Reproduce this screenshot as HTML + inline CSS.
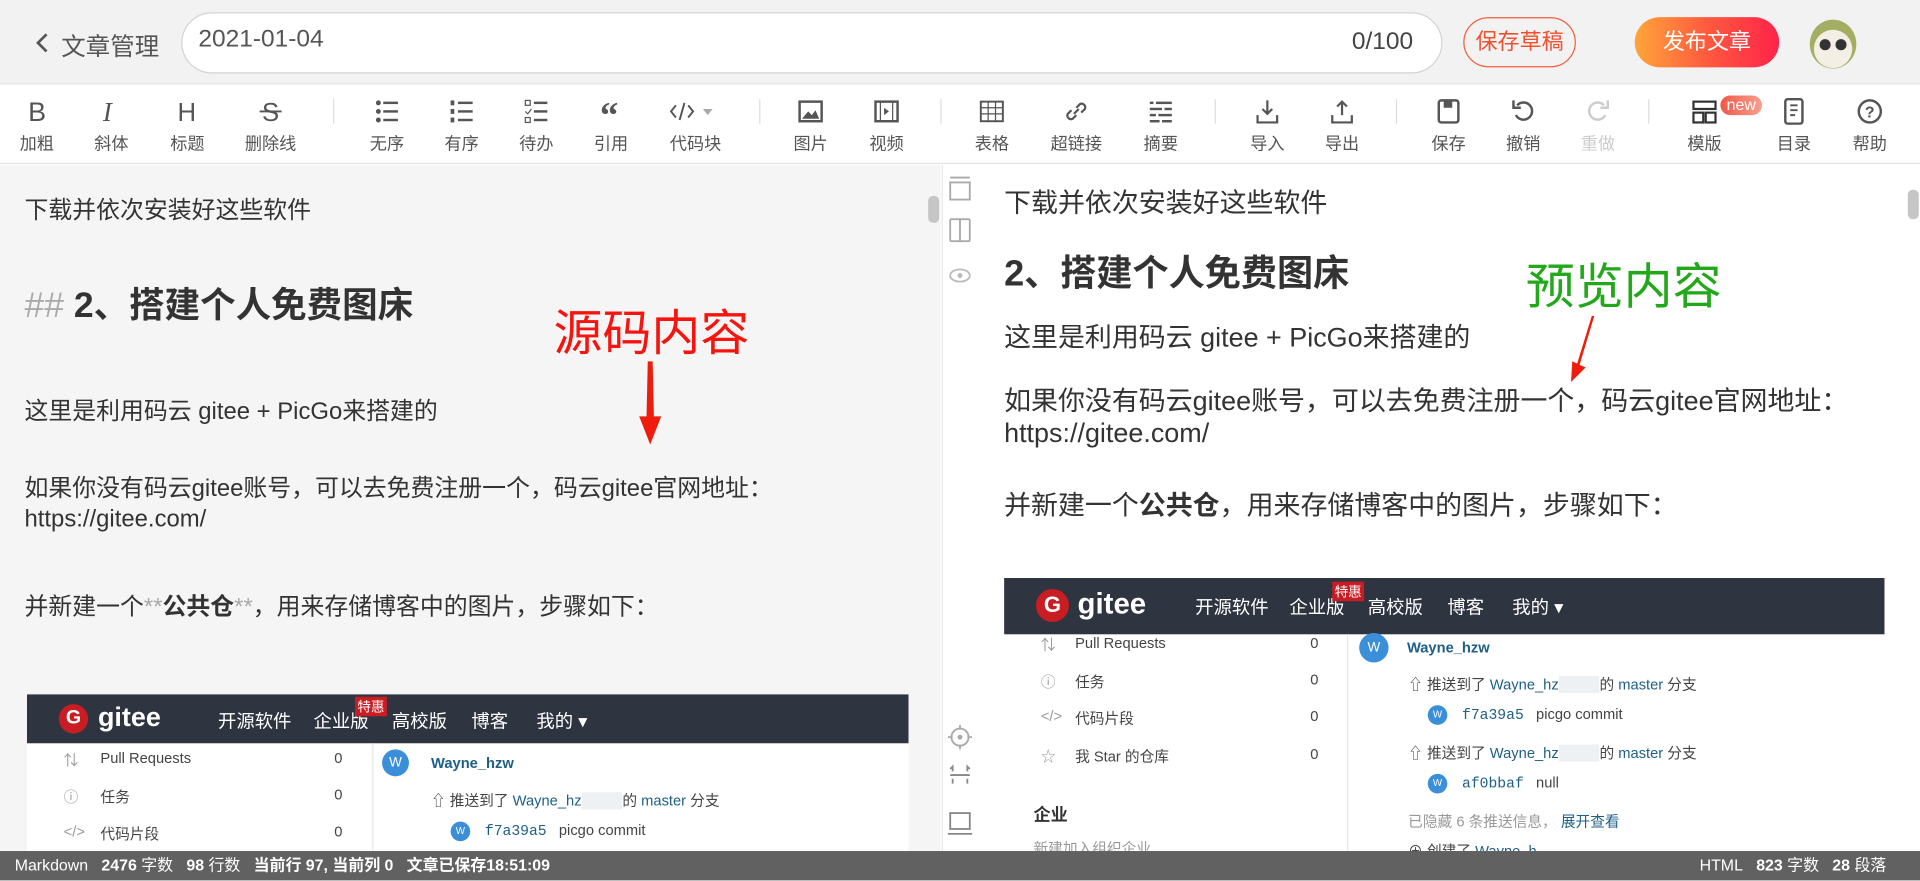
<!DOCTYPE html>
<html><head><meta charset="utf-8"><style>
*{margin:0;padding:0;box-sizing:border-box}
html,body{width:1920px;height:881px;overflow:hidden;background:#fff}
#w{position:absolute;left:0;top:0;width:1568px;height:719px;transform:scale(1.22449);transform-origin:0 0;font-family:"Liberation Sans","Noto Sans CJK SC",sans-serif;color:#333}
.a{position:absolute;white-space:nowrap}
.hd{left:0;top:0;width:1568px;height:68px;background:#f2f2f2}
.tb{left:0;top:68px;width:1568px;height:66px;background:#fff;border-top:1px solid #e4e4e4;border-bottom:1px solid #e4e4e4}
.it{position:absolute;top:0;width:60px;margin-left:-30px;text-align:center}
.it svg{position:absolute;left:19px;top:11px}
.it span{position:absolute;left:0;width:60px;top:38px;font-size:14px;color:#555}
.sep{position:absolute;top:12px;width:1px;height:20px;background:#ddd}
.lp{left:0;top:135px;width:768px;height:560px;background:#f5f5f5}
.rp{left:769px;top:135px;width:799px;height:560px;background:#fff;border-left:1px solid #e6e6e6}
.t{font-size:19.5px;color:#333}
.r{font-size:22px;color:#333}
.g{position:absolute;background:#fff;overflow:hidden}
.gn{position:absolute;left:0;top:0;width:100%;background:#2f3441;color:#fff}
.gs{font-size:12px;color:#444}
.lk{color:#1d5f86}
.st{left:0;top:695px;width:1568px;height:24px;background:#616161;color:#fff;font-size:13px;font-weight:bold;line-height:24px}
</style></head><body><div id="w">
<div class="a hd"></div>
<svg class="a" style="left:28px;top:26px" width="12" height="18"><path d="M10 2L3 9l7 7" stroke="#555" stroke-width="2.2" fill="none"/></svg>
<div class="a" style="left:50px;top:22px;font-size:20px;color:#555">文章管理</div>
<div class="a" style="left:148px;top:10px;width:1030px;height:50px;background:#fff;border:1px solid #d3d3d3;border-radius:25px"></div>
<div class="a" style="left:162px;top:21px;font-size:20px;color:#555">2021-01-04</div>
<div class="a" style="left:1104px;top:23px;font-size:20px;color:#444">0/100</div>
<div class="a" style="left:1195px;top:14px;width:92px;height:41px;border:1px solid #f35f3c;border-radius:21px;color:#f2512f;font-size:18px;line-height:39px;text-align:center">保存草稿</div>
<div class="a" style="left:1335px;top:14px;width:118px;height:41px;border-radius:21px;background:linear-gradient(90deg,#ffa53a,#ff5a3e 50%,#ff2349);color:#fff;font-size:18px;line-height:41px;text-align:center">发布文章</div>
<div class="a" style="left:1478px;top:16px;width:38px;height:40px;border-radius:50%;background:radial-gradient(circle at 50% 60%,#f4efe5 50%,#a4ae62 52%)"></div>
<div class="a" style="left:1486px;top:32px;width:9px;height:9px;border-radius:50%;background:#333"></div>
<div class="a" style="left:1499px;top:32px;width:9px;height:9px;border-radius:50%;background:#333"></div>

<div class="a tb">
<div class="it" style="left:30px"><svg width="22" height="22"><text x="4" y="19" font-size="22" fill="#555" font-family="Liberation Sans">B</text></svg><span>加粗</span></div>
<div class="it" style="left:91px"><svg width="22" height="22"><text x="4" y="19" font-size="22" font-style="italic" fill="#555" font-family="Liberation Serif">I</text></svg><span>斜体</span></div>
<div class="it" style="left:153px"><svg width="22" height="22"><text x="3" y="19" font-size="21" fill="#555" font-family="Liberation Sans">H</text></svg><span>标题</span></div>
<div class="it" style="left:221px"><svg width="22" height="22"><text x="4" y="19" font-size="21" fill="#555" font-family="Liberation Sans">S</text><path d="M2 11h18" stroke="#555" stroke-width="1.6"/></svg><span>删除线</span></div>
<div class="sep" style="left:272px"></div>
<div class="it" style="left:316px"><svg width="22" height="22" fill="#555"><circle cx="4" cy="4" r="2"/><circle cx="4" cy="11" r="2"/><circle cx="4" cy="18" r="2"/><rect x="8" y="3" width="12" height="2"/><rect x="8" y="10" width="12" height="2"/><rect x="8" y="17" width="12" height="2"/></svg><span>无序</span></div>
<div class="it" style="left:377px"><svg width="22" height="22" fill="#555"><rect x="2" y="2" width="3" height="4"/><rect x="2" y="9" width="3" height="4"/><rect x="2" y="16" width="3" height="4"/><rect x="8" y="3" width="12" height="2"/><rect x="8" y="10" width="12" height="2"/><rect x="8" y="17" width="12" height="2"/></svg><span>有序</span></div>
<div class="it" style="left:438px"><svg width="22" height="22" fill="#555"><rect x="2" y="2" width="4" height="4" fill="none" stroke="#555"/><rect x="2" y="16" width="4" height="4" fill="none" stroke="#555"/><path d="M2 11l2 2 3-4" stroke="#555" fill="none"/><rect x="9" y="3" width="11" height="2"/><rect x="9" y="10" width="11" height="2"/><rect x="9" y="17" width="11" height="2"/></svg><span>待办</span></div>
<div class="it" style="left:499px"><svg width="22" height="22"><text x="2" y="24" font-size="30" font-weight="bold" fill="#555" font-family="Liberation Serif">“</text></svg><span>引用</span></div>
<div class="it" style="left:562px"><svg width="36" height="22" style="left:14px"><path d="M6 6l-4 5 4 5M16 6l4 5-4 5M13 4l-4 14" stroke="#555" stroke-width="1.6" fill="none"/><path d="M28 9h8l-4 5z" fill="#aaa"/></svg><span style="left:6px">代码块</span></div>
<div class="sep" style="left:620px"></div>
<div class="it" style="left:662px"><svg width="22" height="22"><rect x="2" y="3" width="18" height="16" fill="none" stroke="#555" stroke-width="2"/><path d="M4 17l5-6 3 3 3-4 3 7z" fill="#555"/></svg><span>图片</span></div>
<div class="it" style="left:724px"><svg width="22" height="22"><rect x="2" y="3" width="18" height="16" fill="none" stroke="#555" stroke-width="2"/><path d="M6 3v16M16 3v16" stroke="#555"/><path d="M9 8l4 3-4 3z" fill="#555"/></svg><span>视频</span></div>
<div class="sep" style="left:768px"></div>
<div class="it" style="left:810px"><svg width="22" height="22"><rect x="2" y="3" width="18" height="16" fill="none" stroke="#555" stroke-width="1.6"/><path d="M2 8h18M2 13h18M8 3v16M14 3v16" stroke="#555"/></svg><span>表格</span></div>
<div class="it" style="left:879px"><svg width="22" height="22"><path d="M9 13l4-4M7 10l-3 3a3 3 0 004 4l3-3M15 12l3-3a3 3 0 00-4-4l-3 3" stroke="#555" stroke-width="1.8" fill="none"/></svg><span>超链接</span></div>
<div class="it" style="left:948px"><svg width="22" height="22" fill="#555"><rect x="2" y="3" width="3" height="2"/><rect x="7" y="3" width="13" height="2"/><rect x="2" y="8" width="10" height="2"/><rect x="14" y="8" width="6" height="2"/><rect x="2" y="13" width="5" height="2"/><rect x="9" y="13" width="11" height="2"/><rect x="2" y="18" width="8" height="2"/><rect x="12" y="18" width="8" height="2"/></svg><span>摘要</span></div>
<div class="sep" style="left:992px"></div>
<div class="it" style="left:1035px"><svg width="22" height="22"><path d="M11 2v11M7 9l4 4 4-4M3 14v6h16v-6" stroke="#555" stroke-width="1.8" fill="none"/></svg><span>导入</span></div>
<div class="it" style="left:1096px"><svg width="22" height="22"><path d="M11 14V3M7 7l4-4 4 4M3 14v6h16v-6" stroke="#555" stroke-width="1.8" fill="none"/></svg><span>导出</span></div>
<div class="sep" style="left:1140px"></div>
<div class="it" style="left:1183px"><svg width="22" height="22"><rect x="3" y="2" width="16" height="18" rx="2" fill="none" stroke="#555" stroke-width="2"/><rect x="7" y="2" width="7" height="6" fill="#555"/></svg><span>保存</span></div>
<div class="it" style="left:1244px"><svg width="22" height="22"><path d="M6 6a7 7 0 11-1 8" stroke="#555" stroke-width="2" fill="none"/><path d="M3 2v6h6" stroke="#555" stroke-width="2" fill="none"/></svg><span>撤销</span></div>
<div class="it" style="left:1305px"><svg width="22" height="22"><path d="M16 6a7 7 0 101 8" stroke="#ccc" stroke-width="2" fill="none"/><path d="M19 2v6h-6" stroke="#ccc" stroke-width="2" fill="none"/></svg><span style="color:#ccc">重做</span></div>
<div class="sep" style="left:1346px"></div>
<div class="it" style="left:1392px"><svg width="22" height="22"><rect x="2" y="3" width="18" height="6" fill="none" stroke="#333" stroke-width="1.8"/><rect x="2" y="12" width="8" height="8" fill="none" stroke="#333" stroke-width="1.8"/><rect x="12" y="12" width="8" height="8" fill="none" stroke="#333" stroke-width="1.8"/></svg><span>模版</span></div>
<div class="a" style="left:1405px;top:9px;width:34px;height:16px;border-radius:8px;background:linear-gradient(90deg,#f0584a,#f7a08f);color:#fff;font-size:13px;line-height:15px;text-align:center">new</div>
<div class="it" style="left:1465px"><svg width="22" height="22"><rect x="4" y="1" width="14" height="20" rx="2" fill="none" stroke="#555" stroke-width="2"/><path d="M8 6h6M8 10h6M8 14h4" stroke="#555" stroke-width="1.6"/></svg><span>目录</span></div>
<div class="it" style="left:1527px"><svg width="22" height="22"><circle cx="11" cy="11" r="9" fill="none" stroke="#555" stroke-width="2"/><text x="7" y="16" font-size="13" font-weight="bold" fill="#555" font-family="Liberation Sans">?</text></svg><span>帮助</span></div>
</div>

<div class="a lp"></div>
<div class="a rp"></div>
<div class="a" style="left:758px;top:160px;width:9px;height:22px;border-radius:4px;background:#c6c6c6"></div>
<div class="a" style="left:1558px;top:155px;width:9px;height:24px;border-radius:4px;background:#c6c6c6"></div>
<svg class="a" style="left:774px;top:143px" width="20" height="100"><path d="M2 2h16" stroke="#aaa" stroke-width="1.5"/><rect x="2" y="6" width="16" height="14" fill="none" stroke="#aaa" stroke-width="1.5"/><rect x="2" y="36" width="16" height="18" rx="1" fill="none" stroke="#aaa" stroke-width="1.5"/><path d="M10 36v18" stroke="#aaa" stroke-width="1.5"/><ellipse cx="10" cy="82" rx="8" ry="5" fill="none" stroke="#bbb" stroke-width="1.5"/><circle cx="10" cy="82" r="2" fill="#bbb"/></svg>
<svg class="a" style="left:774px;top:592px" width="20" height="95"><circle cx="10" cy="10" r="7" fill="none" stroke="#aaa" stroke-width="1.5"/><circle cx="10" cy="10" r="2" fill="#aaa"/><path d="M10 0v4M10 16v4M0 10h4M16 10h4" stroke="#aaa" stroke-width="1.5"/><path d="M4 38v-4l-2 2M16 38v-4l2 2M4 44v4M16 44v4M2 41h16" stroke="#888" stroke-width="1.5" fill="none"/><rect x="2" y="72" width="16" height="13" fill="none" stroke="#888" stroke-width="1.5"/><path d="M0 89h20" stroke="#888" stroke-width="1.5"/></svg>

<!-- left content -->
<div class="a t" style="left:20px;top:155px">下载并依次安装好这些软件</div>
<div class="a" style="left:20px;top:226px;font-size:29px;font-weight:bold;color:#333"><span style="color:#aaa;font-weight:normal">##</span> 2、搭建个人免费图床</div>
<div class="a" style="left:452px;top:240px;font-size:40px;color:#f5140e">源码内容</div>
<svg class="a" style="left:520px;top:295px" width="22" height="70"><path d="M9 0h4l1 45h6L11 68 2 45h6z" fill="#ee1c0c"/></svg>
<div class="a t" style="left:20px;top:319px">这里是利用码云 gitee + PicGo来搭建的</div>
<div class="a t" style="left:20px;top:382px">如果你没有码云gitee账号，可以去免费注册一个，码云gitee官网地址：</div>
<div class="a t" style="left:20px;top:413px">https://gitee.com/</div>
<div class="a t" style="left:20px;top:479px">并新建一个<span style="color:#aaa">**</span><b>公共仓</b><span style="color:#aaa">**</span>，用来存储博客中的图片，步骤如下：</div>

<!-- left gitee -->
<div class="g" style="left:22px;top:567px;width:720px;height:128px">
 <div class="gn" style="height:40px"></div>
 <div class="a" style="left:26px;top:8px;width:24px;height:24px;border-radius:50%;background:#c71d23;color:#fff;font-weight:bold;font-size:16px;text-align:center;line-height:24px">G</div>
 <div class="a" style="left:58px;top:6px;color:#fff;font-size:22px;font-weight:bold">gitee</div>
 <div class="a" style="left:156px;top:11px;color:#fff;font-size:15px">开源软件</div>
 <div class="a" style="left:234px;top:11px;color:#fff;font-size:15px">企业版</div>
 <div class="a" style="left:268px;top:2px;background:#c71d23;color:#fff;font-size:11px;padding:0 2px">特惠</div>
 <div class="a" style="left:298px;top:11px;color:#fff;font-size:15px">高校版</div>
 <div class="a" style="left:363px;top:11px;color:#fff;font-size:15px">博客</div>
 <div class="a" style="left:416px;top:11px;color:#fff;font-size:15px">我的 ▾</div>
 <div class="a" style="left:282px;top:40px;width:1px;height:90px;background:#e6e6e6"></div>
 <div class="a gs" style="left:30px;top:45px;color:#999">⇅</div><div class="a gs" style="left:60px;top:45px">Pull Requests</div><div class="a gs" style="left:251px;top:45px">0</div>
 <div class="a gs" style="left:30px;top:75px;color:#999">ⓘ</div><div class="a gs" style="left:60px;top:75px">任务</div><div class="a gs" style="left:251px;top:75px">0</div>
 <div class="a gs" style="left:30px;top:105px;color:#999">&lt;/&gt;</div><div class="a gs" style="left:60px;top:105px">代码片段</div><div class="a gs" style="left:251px;top:105px">0</div>
 <div class="a" style="left:290px;top:45px;width:22px;height:22px;border-radius:50%;background:#3b8fd8;color:#fff;font-size:11px;text-align:center;line-height:22px">W</div>
 <div class="a lk" style="left:330px;top:49px;font-size:12px;font-weight:bold">Wayne_hzw</div>
 <div class="a gs" style="left:330px;top:78px">⇧ 推送到了 <span class="lk">Wayne_hz</span><span style="background:#eef1f4">&nbsp;&nbsp;&nbsp;&nbsp;&nbsp;&nbsp;&nbsp;&nbsp;&nbsp;&nbsp;</span>的 <span class="lk">master</span> 分支</div>
 <div class="a" style="left:346px;top:104px;width:16px;height:16px;border-radius:50%;background:#3b8fd8;color:#fff;font-size:8px;text-align:center;line-height:16px">W</div>
 <div class="a gs" style="left:374px;top:104px"><span class="lk" style="font-family:'Liberation Mono',monospace">f7a39a5</span>&nbsp;&nbsp; picgo commit</div>
</div>

<!-- right content -->
<div class="a r" style="left:820px;top:148px">下载并依次安装好这些软件</div>
<div class="a" style="left:820px;top:200px;font-size:29.5px;font-weight:bold;color:#333">2、搭建个人免费图床</div>
<div class="a" style="left:1246px;top:202px;font-size:40px;color:#22a81a">预览内容</div>
<svg class="a" style="left:1278px;top:256px" width="26" height="56"><path d="M22 2h2L12 42l5 2-12 12 1-17 4 2z" fill="#ee1c0c"/></svg>
<div class="a r" style="left:820px;top:258px">这里是利用码云 gitee + PicGo来搭建的</div>
<div class="a r" style="left:820px;top:310px">如果你没有码云gitee账号，可以去免费注册一个，码云gitee官网地址：</div>
<div class="a r" style="left:820px;top:341px">https://gitee.com/</div>
<div class="a r" style="left:820px;top:395px">并新建一个<b>公共仓</b>，用来存储博客中的图片，步骤如下：</div>

<!-- right gitee -->
<div class="g" style="left:820px;top:472px;width:719px;height:223px">
 <div class="gn" style="height:46px"></div>
 <div class="a" style="left:26px;top:9px;width:27px;height:27px;border-radius:50%;background:#c71d23;color:#fff;font-weight:bold;font-size:18px;text-align:center;line-height:27px">G</div>
 <div class="a" style="left:60px;top:8px;color:#fff;font-size:24px;font-weight:bold">gitee</div>
 <div class="a" style="left:156px;top:13px;color:#fff;font-size:15px">开源软件</div>
 <div class="a" style="left:233px;top:13px;color:#fff;font-size:15px">企业版</div>
 <div class="a" style="left:268px;top:3px;background:#c71d23;color:#fff;font-size:11px;padding:0 2px">特惠</div>
 <div class="a" style="left:297px;top:13px;color:#fff;font-size:15px">高校版</div>
 <div class="a" style="left:362px;top:13px;color:#fff;font-size:15px">博客</div>
 <div class="a" style="left:415px;top:13px;color:#fff;font-size:15px">我的 ▾</div>
 <div class="a" style="left:280px;top:46px;width:1px;height:180px;background:#e6e6e6"></div>
 <div class="a gs" style="left:30px;top:46px;color:#999">⇅</div><div class="a gs" style="left:58px;top:46px">Pull Requests</div><div class="a gs" style="left:250px;top:46px">0</div>
 <div class="a gs" style="left:30px;top:76px;color:#999">ⓘ</div><div class="a gs" style="left:58px;top:76px">任务</div><div class="a gs" style="left:250px;top:76px">0</div>
 <div class="a gs" style="left:30px;top:106px;color:#999">&lt;/&gt;</div><div class="a gs" style="left:58px;top:106px">代码片段</div><div class="a gs" style="left:250px;top:106px">0</div>
 <div class="a gs" style="left:30px;top:137px;color:#999">☆</div><div class="a gs" style="left:58px;top:137px">我 Star 的仓库</div><div class="a gs" style="left:250px;top:137px">0</div>
 <div class="a" style="left:24px;top:183px;font-size:14px;font-weight:bold;color:#333">企业</div>
 <div class="a gs" style="left:24px;top:212px;color:#999">新建加入组织企业</div>
 <div class="a" style="left:290px;top:45px;width:24px;height:24px;border-radius:50%;background:#3b8fd8;color:#fff;font-size:11px;text-align:center;line-height:24px">W</div>
 <div class="a lk" style="left:329px;top:50px;font-size:12px;font-weight:bold">Wayne_hzw</div>
 <div class="a gs" style="left:330px;top:78px">⇧ 推送到了 <span class="lk">Wayne_hz</span><span style="background:#eef1f4">&nbsp;&nbsp;&nbsp;&nbsp;&nbsp;&nbsp;&nbsp;&nbsp;&nbsp;&nbsp;</span>的 <span class="lk">master</span> 分支</div>
 <div class="a" style="left:346px;top:104px;width:16px;height:16px;border-radius:50%;background:#3b8fd8;color:#fff;font-size:8px;text-align:center;line-height:16px">W</div>
 <div class="a gs" style="left:374px;top:104px"><span class="lk" style="font-family:'Liberation Mono',monospace">f7a39a5</span>&nbsp;&nbsp; picgo commit</div>
 <div class="a gs" style="left:330px;top:134px">⇧ 推送到了 <span class="lk">Wayne_hz</span><span style="background:#eef1f4">&nbsp;&nbsp;&nbsp;&nbsp;&nbsp;&nbsp;&nbsp;&nbsp;&nbsp;&nbsp;</span>的 <span class="lk">master</span> 分支</div>
 <div class="a" style="left:346px;top:160px;width:16px;height:16px;border-radius:50%;background:#3b8fd8;color:#fff;font-size:8px;text-align:center;line-height:16px">W</div>
 <div class="a gs" style="left:374px;top:160px"><span class="lk" style="font-family:'Liberation Mono',monospace">af0bbaf</span>&nbsp;&nbsp; null</div>
 <div class="a gs" style="left:330px;top:190px;color:#999">已隐藏 6 条推送信息， <span class="lk">展开查看</span></div>
 <div class="a gs" style="left:330px;top:214px">⊕ 创建了 <span class="lk">Wayne_h</span></div>
</div>

<div class="a st"><span style="margin-left:12px;font-weight:normal">Markdown</span>&nbsp;&nbsp; 2476 <span style="font-weight:normal">字数</span>&nbsp;&nbsp; 98 <span style="font-weight:normal">行数</span>&nbsp;&nbsp; 当前行 97, 当前列 0&nbsp;&nbsp; 文章已保存18:51:09</div>
<div class="a" style="left:1388px;top:695px;color:#fff;font-size:13px;line-height:24px;font-weight:bold"><span style="font-weight:normal">HTML</span>&nbsp;&nbsp; 823 <span style="font-weight:normal">字数</span>&nbsp;&nbsp; 28 <span style="font-weight:normal">段落</span></div>
</div></body></html>
